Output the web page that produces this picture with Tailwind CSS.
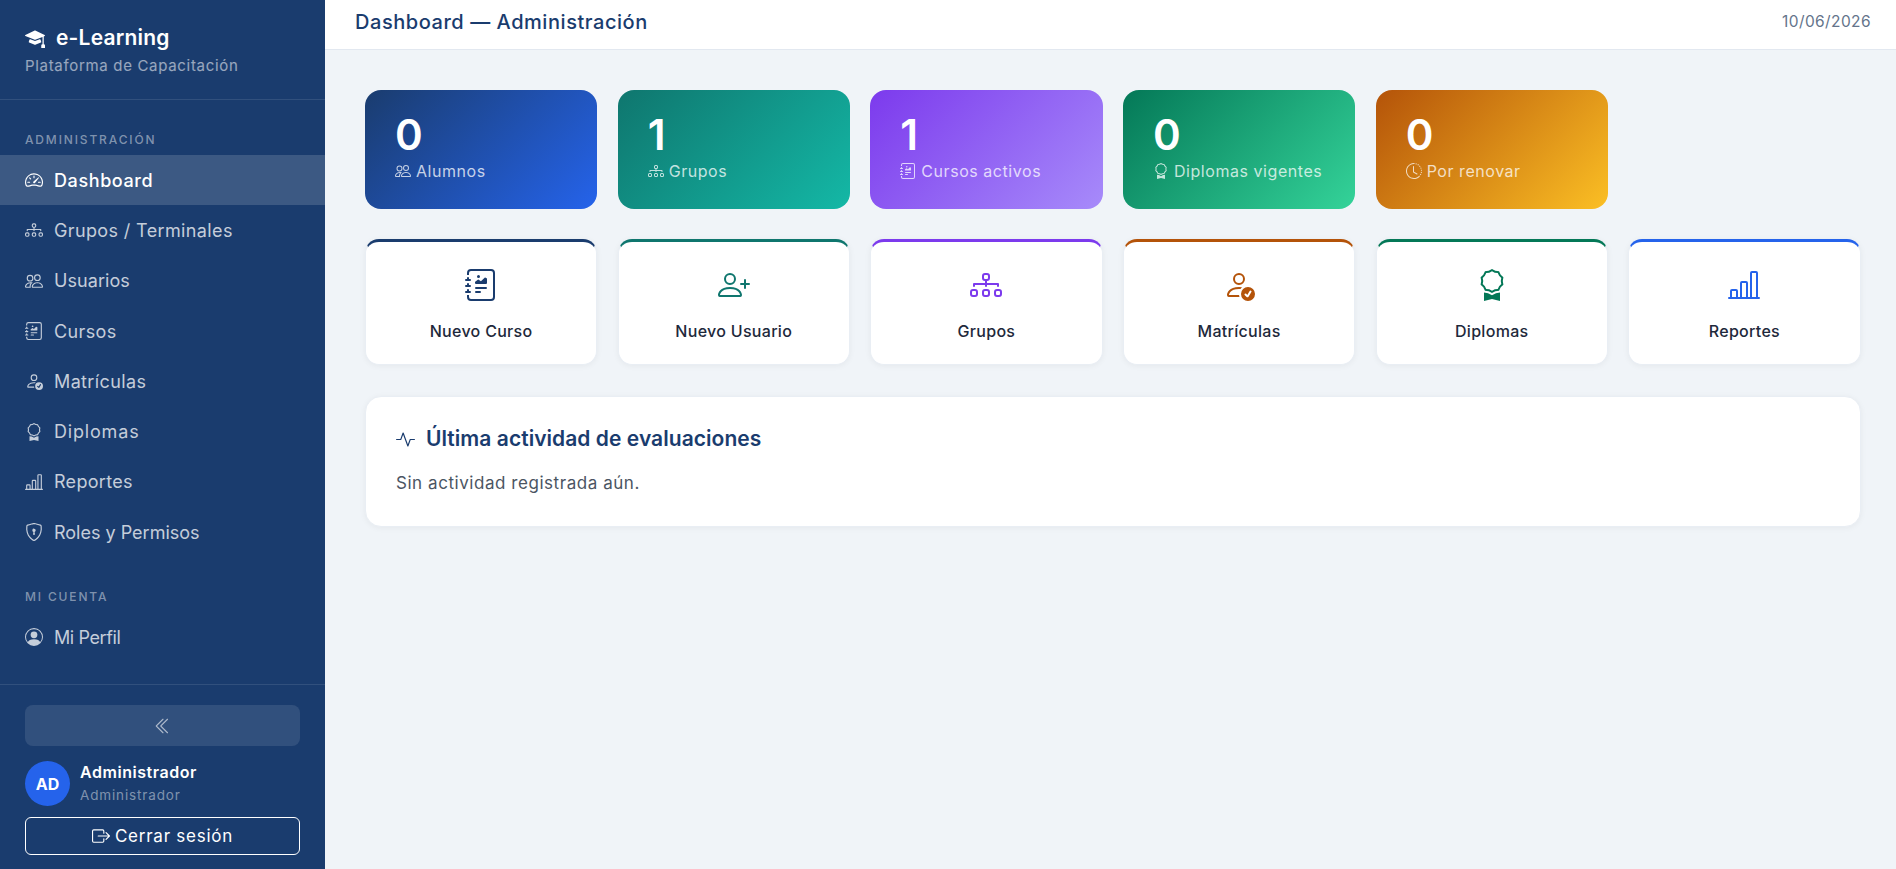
<!DOCTYPE html>
<html lang="es">
<head>
<meta charset="utf-8">
<title>Dashboard</title>
<script src="https://cdn.jsdelivr.net/npm/@tailwindcss/browser@4"></script>
</head>
<body class="h-[869px] overflow-hidden bg-[#f0f4f8] font-['Inter','Open_Sans',sans-serif]">
<svg class="hidden" xmlns="http://www.w3.org/2000/svg">
<symbol id="mortar" viewBox="0 0 16 16"><path d="M8.211 2.047a.5.5 0 0 0-.422 0l-7.5 3.5a.5.5 0 0 0 .025.917l7.5 3a.5.5 0 0 0 .372 0L14 7.14V13a1 1 0 0 0-1 1v2h3v-2a1 1 0 0 0-1-1V6.739l.686-.275a.5.5 0 0 0 .025-.917z"/><path d="M4.176 9.032a.5.5 0 0 0-.656.327l-.5 1.7a.5.5 0 0 0 .294.605l4.5 1.8a.5.5 0 0 0 .372 0l4.5-1.8a.5.5 0 0 0 .294-.605l-.5-1.7a.5.5 0 0 0-.656-.327L8 10.466z"/></symbol>
<symbol id="speed" viewBox="0 0 16 16"><path d="M8 4a.5.5 0 0 1 .5.5V6a.5.5 0 0 1-1 0V4.5A.5.5 0 0 1 8 4M3.732 5.732a.5.5 0 0 1 .707 0l.915.914a.5.5 0 1 1-.708.708l-.914-.915a.5.5 0 0 1 0-.707M2 10a.5.5 0 0 1 .5-.5h1.586a.5.5 0 0 1 0 1H2.5A.5.5 0 0 1 2 10m9.5 0a.5.5 0 0 1 .5-.5h1.5a.5.5 0 0 1 0 1H12a.5.5 0 0 1-.5-.5m.754-4.246a.39.39 0 0 0-.527-.02L7.547 9.31a.91.91 0 1 0 1.302 1.258l3.434-4.297a.39.39 0 0 0-.029-.518z"/><path fill-rule="evenodd" d="M0 10a8 8 0 1 1 15.547 2.661c-.442 1.253-1.845 1.602-2.932 1.25C11.309 13.488 9.475 13 8 13c-1.474 0-3.31.488-4.615.911-1.087.352-2.49.003-2.932-1.25A8 8 0 0 1 0 10m8-7a7 7 0 0 0-6.603 9.329c.203.575.923.876 1.68.63C4.397 12.533 6.358 12 8 12s3.604.532 4.923.96c.757.245 1.477-.056 1.68-.631A7 7 0 0 0 8 3"/></symbol>
<symbol id="diagram" viewBox="0 0 16 16"><path fill-rule="evenodd" d="M6 3.5A1.5 1.5 0 0 1 7.5 2h1A1.5 1.5 0 0 1 10 3.5v1A1.5 1.5 0 0 1 8.5 6v1H14a.5.5 0 0 1 .5.5v1a.5.5 0 0 1-1 0V8h-5v.5a.5.5 0 0 1-1 0V8h-5v.5a.5.5 0 0 1-1 0v-1A.5.5 0 0 1 2 7h5.5V6A1.5 1.5 0 0 1 6 4.5zM8.5 5a.5.5 0 0 0 .5-.5v-1a.5.5 0 0 0-.5-.5h-1a.5.5 0 0 0-.5.5v1a.5.5 0 0 0 .5.5zM0 11.5A1.5 1.5 0 0 1 1.5 10h1A1.5 1.5 0 0 1 4 11.5v1A1.5 1.5 0 0 1 2.5 14h-1A1.5 1.5 0 0 1 0 12.5zm1.5-.5a.5.5 0 0 0-.5.5v1a.5.5 0 0 0 .5.5h1a.5.5 0 0 0 .5-.5v-1a.5.5 0 0 0-.5-.5zm4.5.5A1.5 1.5 0 0 1 7.5 10h1a1.5 1.5 0 0 1 1.5 1.5v1A1.5 1.5 0 0 1 8.5 14h-1A1.5 1.5 0 0 1 6 12.5zm1.5-.5a.5.5 0 0 0-.5.5v1a.5.5 0 0 0 .5.5h1a.5.5 0 0 0 .5-.5v-1a.5.5 0 0 0-.5-.5zm4.5.5a1.5 1.5 0 0 1 1.5-1.5h1a1.5 1.5 0 0 1 1.5 1.5v1a1.5 1.5 0 0 1-1.5 1.5h-1a1.5 1.5 0 0 1-1.5-1.5zm1.5-.5a.5.5 0 0 0-.5.5v1a.5.5 0 0 0 .5.5h1a.5.5 0 0 0 .5-.5v-1a.5.5 0 0 0-.5-.5z"/></symbol>
<symbol id="people" viewBox="0 0 16 16"><path d="M15 14s1 0 1-1-1-4-5-4-5 3-5 4 1 1 1 1zm-7.978-1L7 12.996c.001-.264.167-1.03.76-1.72C8.312 10.629 9.282 10 11 10c1.717 0 2.687.63 3.24 1.276.593.69.758 1.457.76 1.72l-.008.002-.014.002zM11 7a2 2 0 1 0 0-4 2 2 0 0 0 0 4m3-2a3 3 0 1 1-6 0 3 3 0 0 1 6 0M6.936 9.28a6 6 0 0 0-1.23-.247A7 7 0 0 0 5 9c-4 0-5 3-5 4q0 1 1 1h4.216A2.24 2.24 0 0 1 5 13c0-1.01.377-2.042 1.09-2.904.243-.294.526-.569.846-.816M4.92 10A5.5 5.5 0 0 0 4 13H1c0-.26.164-1.03.76-1.724.545-.636 1.492-1.256 3.16-1.275ZM1.5 5.5a3 3 0 1 1 6 0 3 3 0 0 1-6 0m3-2a2 2 0 1 0 0 4 2 2 0 0 0 0-4"/></symbol>
<symbol id="journal" viewBox="0 0 16 16"><path d="M7.5 3.75a.75.75 0 1 1-1.5 0 .75.75 0 0 1 1.5 0m-.861 1.542 1.33.886 1.854-1.855a.25.25 0 0 1 .289-.047L11 4.75V7a.5.5 0 0 1-.5.5h-5A.5.5 0 0 1 5 7v-.5s1.54-1.274 1.639-1.208M5 9.5a.5.5 0 0 1 .5-.5h5a.5.5 0 0 1 0 1h-5a.5.5 0 0 1-.5-.5m0 2a.5.5 0 0 1 .5-.5h2a.5.5 0 0 1 0 1h-2a.5.5 0 0 1-.5-.5"/><path d="M3 0h10a2 2 0 0 1 2 2v12a2 2 0 0 1-2 2H3a2 2 0 0 1-2-2v-1h1v1a1 1 0 0 0 1 1h10a1 1 0 0 0 1-1V2a1 1 0 0 0-1-1H3a1 1 0 0 0-1 1v1H1V2a2 2 0 0 1 2-2"/><path d="M1 5v-.5a.5.5 0 0 1 1 0V5h.5a.5.5 0 0 1 0 1h-2a.5.5 0 0 1 0-1zm0 3v-.5a.5.5 0 0 1 1 0V8h.5a.5.5 0 0 1 0 1h-2a.5.5 0 0 1 0-1zm0 3v-.5a.5.5 0 0 1 1 0v.5h.5a.5.5 0 0 1 0 1h-2a.5.5 0 0 1 0-1z"/></symbol>
<symbol id="pcheck" viewBox="0 0 16 16"><path d="M12.5 16a3.5 3.5 0 1 0 0-7 3.5 3.5 0 0 0 0 7m1.679-4.493-1.335 2.226a.75.75 0 0 1-1.174.144l-.774-.773a.5.5 0 0 1 .708-.708l.547.548 1.17-1.951a.5.5 0 1 1 .858.514M11 5a3 3 0 1 1-6 0 3 3 0 0 1 6 0M8 7a2 2 0 1 0 0-4 2 2 0 0 0 0 4"/><path d="M8.256 14a4.5 4.5 0 0 1-.229-1.004H3c.001-.246.154-.986.832-1.664C4.484 10.68 5.711 10 8 10q.39 0 .74.025c.226-.341.496-.65.804-.918Q8.844 9.002 8 9c-5 0-6 3-6 4s1 1 1 1z"/></symbol>
<symbol id="award" viewBox="0 0 16 16"><path d="M9.669.864 8 0 6.331.864l-1.858.282-.842 1.68-1.337 1.32L2.6 6l-.306 1.854 1.337 1.32.842 1.68 1.858.282L8 12l1.669-.864 1.858-.282.842-1.68 1.337-1.32L13.4 6l.306-1.854-1.337-1.32-.842-1.68zm1.196 1.193.684 1.365 1.086 1.072L12.387 6l.248 1.506-1.086 1.072-.684 1.365-1.51.229L8 10.874l-1.355-.702-1.51-.229-.684-1.365-1.086-1.072L3.614 6l-.25-1.506 1.087-1.072.684-1.365 1.51-.229L8 1.126l1.356.702z"/><path d="M4 11.794V16l4-1 4 1v-4.206l-2.018.306L8 13.126 6.018 12.1z"/></symbol>
<symbol id="chart" viewBox="0 0 16 16"><path d="M11 2a1 1 0 0 1 1-1h2a1 1 0 0 1 1 1v12h.5a.5.5 0 0 1 0 1H.5a.5.5 0 0 1 0-1H1v-3a1 1 0 0 1 1-1h2a1 1 0 0 1 1 1v3h1V7a1 1 0 0 1 1-1h2a1 1 0 0 1 1 1v7h1zm1 12h2V2h-2zm-3 0V7H7v7zm-5 0v-3H2v3z"/></symbol>
<symbol id="shield" viewBox="0 0 16 16"><path d="M5.338 1.59a61 61 0 0 0-2.837.856.48.48 0 0 0-.328.39c-.554 4.157.726 7.19 2.253 9.188a10.7 10.7 0 0 0 2.287 2.233c.346.244.652.42.893.533q.18.085.293.118a1 1 0 0 0 .101.025 1 1 0 0 0 .1-.025q.114-.034.294-.118c.24-.113.547-.29.893-.533a10.7 10.7 0 0 0 2.287-2.233c1.527-1.997 2.807-5.031 2.253-9.188a.48.48 0 0 0-.328-.39c-.651-.213-1.75-.56-2.837-.855C9.552 1.29 8.531 1.067 8 1.067c-.53 0-1.552.223-2.662.524zM5.072.56C6.157.265 7.31 0 8 0s1.843.265 2.928.56c1.11.3 2.229.655 2.887.87a1.54 1.54 0 0 1 1.044 1.262c.596 4.477-.787 7.795-2.465 9.99a11.8 11.8 0 0 1-2.517 2.453 7 7 0 0 1-1.048.625c-.28.132-.581.24-.829.24s-.548-.108-.829-.24a7 7 0 0 1-1.048-.625 11.8 11.8 0 0 1-2.517-2.453C1.928 10.487.545 7.169 1.141 2.692A1.54 1.54 0 0 1 2.185 1.43 63 63 0 0 1 5.072.56"/><path d="M9.5 6.5a1.5 1.5 0 0 1-1 1.415l.385 1.99a.5.5 0 0 1-.491.595h-.788a.5.5 0 0 1-.49-.595l.384-1.99a1.5 1.5 0 1 1 2-1.415"/></symbol>
<symbol id="pcircle" viewBox="0 0 16 16"><path d="M11 6a3 3 0 1 1-6 0 3 3 0 0 1 6 0"/><path fill-rule="evenodd" d="M0 8a8 8 0 1 1 16 0A8 8 0 0 1 0 8m8-7a7 7 0 0 0-5.468 11.37C3.242 11.226 4.805 10 8 10s4.757 1.225 5.468 2.37A7 7 0 0 0 8 1"/></symbol>
<symbol id="chev" viewBox="0 0 16 16"><path fill-rule="evenodd" d="M8.354 1.646a.5.5 0 0 1 0 .708L2.707 8l5.647 5.646a.5.5 0 0 1-.708.708l-6-6a.5.5 0 0 1 0-.708l6-6a.5.5 0 0 1 .708 0"/><path fill-rule="evenodd" d="M12.354 1.646a.5.5 0 0 1 0 .708L6.707 8l5.647 5.646a.5.5 0 0 1-.708.708l-6-6a.5.5 0 0 1 0-.708l6-6a.5.5 0 0 1 .708 0"/></symbol>
<symbol id="logout" viewBox="0 0 16 16"><path fill-rule="evenodd" d="M10 12.5a.5.5 0 0 1-.5.5h-8a.5.5 0 0 1-.5-.5v-9a.5.5 0 0 1 .5-.5h8a.5.5 0 0 1 .5.5v2a.5.5 0 0 0 1 0v-2A1.5 1.5 0 0 0 9.5 2h-8A1.5 1.5 0 0 0 0 3.5v9A1.5 1.5 0 0 0 1.5 14h8a1.5 1.5 0 0 0 1.5-1.5v-2a.5.5 0 0 0-1 0z"/><path fill-rule="evenodd" d="M15.854 8.354a.5.5 0 0 0 0-.708l-3-3a.5.5 0 0 0-.708.708L14.293 7.5H5.5a.5.5 0 0 0 0 1h8.793l-2.147 2.146a.5.5 0 0 0 .708.708z"/></symbol>
<symbol id="pplus" viewBox="0 0 16 16"><path d="M6 8a3 3 0 1 0 0-6 3 3 0 0 0 0 6m2-3a2 2 0 1 1-4 0 2 2 0 0 1 4 0m4 8c0 1-1 1-1 1H1s-1 0-1-1 1-4 6-4 6 3 6 4m-1-.004c-.001-.246-.154-.986-.832-1.664C9.516 10.68 8.289 10 6 10s-3.516.68-4.168 1.332c-.678.678-.83 1.418-.832 1.664z"/><path fill-rule="evenodd" d="M13.5 5a.5.5 0 0 1 .5.5V7h1.5a.5.5 0 0 1 0 1H14v1.5a.5.5 0 0 1-1 0V8h-1.5a.5.5 0 0 1 0-1H13V5.5a.5.5 0 0 1 .5-.5"/></symbol>
<symbol id="clockh" viewBox="0 0 16 16"><path d="M8.515 1.019A7 7 0 0 0 8 1V0a8 8 0 0 1 .589.022zm2.004.45a7 7 0 0 0-.985-.299l.219-.976q.576.129 1.126.342zm1.37.71a7 7 0 0 0-.439-.27l.493-.87a8 8 0 0 1 .979.654l-.615.789a7 7 0 0 0-.418-.302zm1.834 1.79a7 7 0 0 0-.653-.796l.724-.69q.406.429.747.91zm.744 1.352a7 7 0 0 0-.214-.468l.893-.45a8 8 0 0 1 .45 1.088l-.95.313a7 7 0 0 0-.179-.483m.53 2.507a7 7 0 0 0-.1-1.025l.985-.17q.1.58.116 1.17zm-.131 1.538q.05-.254.081-.51l.993.123a8 8 0 0 1-.23 1.155l-.964-.267q.069-.247.12-.501m-.952 2.379q.276-.436.486-.908l.914.405q-.24.54-.555 1.038zm-.964 1.205q.183-.183.35-.378l.758.653a8 8 0 0 1-.401.432z"/><path d="M8 1a7 7 0 1 0 4.95 11.95l.707.707A8.001 8.001 0 1 1 8 0z"/><path d="M7.5 3a.5.5 0 0 1 .5.5v5.21l3.248 1.856a.5.5 0 0 1-.496.868l-3.5-2A.5.5 0 0 1 7 9V3.5a.5.5 0 0 1 .5-.5"/></symbol>
<symbol id="activity" viewBox="0 0 16 16"><path fill-rule="evenodd" d="M6 2a.5.5 0 0 1 .47.33L10 12.036l1.53-4.208A.5.5 0 0 1 12 7.5h3.5a.5.5 0 0 1 0 1h-3.15l-1.88 5.17a.5.5 0 0 1-.94 0L6 3.964 4.47 8.171A.5.5 0 0 1 4 8.5H.5a.5.5 0 0 1 0-1h3.15l1.88-5.17A.5.5 0 0 1 6 2"/></symbol>
</svg>

<div class="flex h-[869px]">
  <aside class="flex w-[325px] shrink-0 flex-col bg-[#1a3c6e]">
    <div class="h-[100px] border-b border-white/10 px-[25px] pt-[25px]">
      <div class="flex h-[26px] items-center gap-[11px] text-[21px] leading-[26px] font-semibold tracking-[0.2px] text-white">
        <svg class="size-[20px] fill-current"><use href="#mortar"/></svg><span>e-Learning</span>
      </div>
      <div class="mt-[4px] text-[15px] leading-[22px] tracking-[0.68px] text-white/55">Plataforma de Capacitación</div>
    </div>
    <nav class="flex-1">
      <div class="flex h-[55px] items-end px-[25px] pb-[7px] text-[12px] leading-[16px] font-medium tracking-[1.85px] text-white/45">ADMINISTRACIÓN</div>
      <a class="flex h-[50.3px] items-center gap-[11px] bg-white/15 px-[25px] text-[18px] font-medium tracking-[0.6px] text-white"><svg class="size-[18px] fill-current"><use href="#speed"/></svg><span>Dashboard</span></a>
      <a class="flex h-[50.3px] items-center gap-[11px] px-[25px] text-[18px] tracking-[0.37px] text-white/75"><svg class="size-[18px] fill-current"><use href="#diagram"/></svg><span>Grupos / Terminales</span></a>
      <a class="flex h-[50.3px] items-center gap-[11px] px-[25px] text-[18px] tracking-[0.07px] text-white/75"><svg class="size-[18px] fill-current"><use href="#people"/></svg><span>Usuarios</span></a>
      <a class="flex h-[50.3px] items-center gap-[11px] px-[25px] text-[18px] tracking-[0.37px] text-white/75"><svg class="size-[18px] fill-current"><use href="#journal"/></svg><span>Cursos</span></a>
      <a class="flex h-[50.3px] items-center gap-[11px] px-[25px] text-[18px] tracking-[0.37px] text-white/75"><svg class="size-[18px] fill-current"><use href="#pcheck"/></svg><span>Matrículas</span></a>
      <a class="flex h-[50.3px] items-center gap-[11px] px-[25px] text-[18px] tracking-[0.82px] text-white/75"><svg class="size-[18px] fill-current"><use href="#award"/></svg><span>Diplomas</span></a>
      <a class="flex h-[50.3px] items-center gap-[11px] px-[25px] text-[18px] tracking-[0.3px] text-white/75"><svg class="size-[18px] fill-current"><use href="#chart"/></svg><span>Reportes</span></a>
      <a class="flex h-[50.3px] items-center gap-[11px] px-[25px] text-[18px] tracking-[0px] text-white/75"><svg class="size-[18px] fill-current"><use href="#shield"/></svg><span>Roles y Permisos</span></a>
      <div class="flex h-[54.6px] items-end px-[25px] pb-[7px] text-[12px] leading-[16px] font-medium tracking-[1.85px] text-white/45">MI CUENTA</div>
      <a class="flex h-[50.3px] items-center gap-[11px] px-[25px] text-[18px] tracking-[-0.4px] text-white/75"><svg class="size-[18px] fill-current"><use href="#pcircle"/></svg><span>Mi Perfil</span></a>
    </nav>
    <div class="border-t border-white/10 px-[25px] pt-[20px] pb-[14px]">
      <button class="flex h-[41px] w-full items-center justify-center rounded-[8px] bg-white/10 text-white/60"><svg class="size-[18px] fill-current"><use href="#chev"/></svg></button>
      <div class="mt-[15px] flex h-[45px] items-center gap-[10px]">
        <div class="flex size-[45px] items-center justify-center rounded-full bg-[#2563eb] text-[16px] font-bold text-white">AD</div>
        <div>
          <div class="pt-[1px] text-[16px] leading-[22px] font-semibold tracking-[0.55px] text-white">Administrador</div>
          <div class="mt-[1px] text-[13.5px] leading-[23px] tracking-[0.85px] text-white/45">Administrador</div>
        </div>
      </div>
      <button class="mt-[11px] flex h-[38px] w-full items-center justify-center gap-[5px] rounded-[6px] border border-white text-[17px] tracking-[0.75px] text-white"><svg class="size-[18px] fill-current"><use href="#logout"/></svg><span class="pt-[1px]">Cerrar sesión</span></button>
    </div>
  </aside>

  <main class="min-w-0 flex-1">
    <header class="flex h-[50px] items-center justify-between border-b border-[#e2e8f0] bg-white pr-[25px] pb-[5px] pl-[30px]">
      <h1 class="text-[20px] font-medium tracking-[0.55px] text-[#1a3c6e]">Dashboard — Administración</h1>
      <span class="text-[15.5px] tracking-[0.4px] text-[#64748b]">10/06/2026</span>
    </header>
    <div class="pt-[40px] pr-[35.5px] pl-[40px]">
      <section class="grid grid-cols-6 gap-[20.5px]">
        <div class="flex h-[119px] flex-col rounded-[16px] bg-linear-[135deg,#1a3c6e,#2563eb] pt-[21px] pl-[30px] text-white">
          <div class="text-[42px] leading-[48px] font-semibold">0</div>
          <div class="flex items-center gap-[5px] text-[16px] leading-[24px] tracking-[0.55px] text-white/75"><svg class="size-[16px] fill-current"><use href="#people"/></svg>Alumnos</div>
        </div>
        <div class="flex h-[119px] flex-col rounded-[16px] bg-linear-[135deg,#0f766e,#14b8a6] pt-[21px] pl-[30px] text-white">
          <div class="text-[42px] leading-[48px] font-semibold">1</div>
          <div class="flex items-center gap-[5px] text-[16px] leading-[24px] tracking-[0.55px] text-white/75"><svg class="size-[16px] fill-current"><use href="#diagram"/></svg>Grupos</div>
        </div>
        <div class="flex h-[119px] flex-col rounded-[16px] bg-linear-[135deg,#7c3aed,#a78bfa] pt-[21px] pl-[30px] text-white">
          <div class="text-[42px] leading-[48px] font-semibold">1</div>
          <div class="flex items-center gap-[5px] text-[16px] leading-[24px] tracking-[0.55px] text-white/75"><svg class="size-[16px] fill-current"><use href="#journal"/></svg>Cursos activos</div>
        </div>
        <div class="flex h-[119px] flex-col rounded-[16px] bg-linear-[135deg,#047857,#34d399] pt-[21px] pl-[30px] text-white">
          <div class="text-[42px] leading-[48px] font-semibold">0</div>
          <div class="flex items-center gap-[5px] text-[16px] leading-[24px] tracking-[0.55px] text-white/75"><svg class="size-[16px] fill-current"><use href="#award"/></svg>Diplomas vigentes</div>
        </div>
        <div class="flex h-[119px] flex-col rounded-[16px] bg-linear-[135deg,#b45309,#fbbf24] pt-[21px] pl-[30px] text-white">
          <div class="text-[42px] leading-[48px] font-semibold">0</div>
          <div class="flex items-center gap-[5px] text-[16px] leading-[24px] tracking-[0.55px] text-white/75"><svg class="size-[16px] fill-current"><use href="#clockh"/></svg>Por renovar</div>
        </div>
      </section>

      <section class="mt-[30px] grid grid-cols-6 gap-[20.5px]">
        <a class="flex h-[126px] flex-col items-center rounded-[14px] border border-t-[3px] border-[#e9eef4] border-t-[#1a3c6e] bg-white pt-[27px] text-[#1a3c6e] shadow-[0_1px_6px_rgba(0,0,0,0.05)]"><svg class="size-[32px] fill-current"><use href="#journal"/></svg><span class="mt-[18px] text-[16px] leading-[24px] font-medium tracking-[0.3px] text-[#1e293b]">Nuevo Curso</span></a>
        <a class="flex h-[126px] flex-col items-center rounded-[14px] border border-t-[3px] border-[#e9eef4] border-t-[#0f766e] bg-white pt-[27px] text-[#0f766e] shadow-[0_1px_6px_rgba(0,0,0,0.05)]"><svg class="size-[32px] fill-current"><use href="#pplus"/></svg><span class="mt-[18px] text-[16px] leading-[24px] font-medium tracking-[0.3px] text-[#1e293b]">Nuevo Usuario</span></a>
        <a class="flex h-[126px] flex-col items-center rounded-[14px] border border-t-[3px] border-[#e9eef4] border-t-[#7c3aed] bg-white pt-[27px] text-[#7c3aed] shadow-[0_1px_6px_rgba(0,0,0,0.05)]"><svg class="size-[32px] fill-current"><use href="#diagram"/></svg><span class="mt-[18px] text-[16px] leading-[24px] font-medium tracking-[0.3px] text-[#1e293b]">Grupos</span></a>
        <a class="flex h-[126px] flex-col items-center rounded-[14px] border border-t-[3px] border-[#e9eef4] border-t-[#b45309] bg-white pt-[27px] text-[#b45309] shadow-[0_1px_6px_rgba(0,0,0,0.05)]"><svg class="size-[32px] fill-current"><use href="#pcheck"/></svg><span class="mt-[18px] text-[16px] leading-[24px] font-medium tracking-[0.3px] text-[#1e293b]">Matrículas</span></a>
        <a class="flex h-[126px] flex-col items-center rounded-[14px] border border-t-[3px] border-[#e9eef4] border-t-[#047857] bg-white pt-[27px] text-[#047857] shadow-[0_1px_6px_rgba(0,0,0,0.05)]"><svg class="size-[32px] fill-current"><use href="#award"/></svg><span class="mt-[18px] text-[16px] leading-[24px] font-medium tracking-[0.3px] text-[#1e293b]">Diplomas</span></a>
        <a class="flex h-[126px] flex-col items-center rounded-[14px] border border-t-[3px] border-[#e9eef4] border-t-[#2563eb] bg-white pt-[27px] text-[#2563eb] shadow-[0_1px_6px_rgba(0,0,0,0.05)]"><svg class="size-[32px] fill-current"><use href="#chart"/></svg><span class="mt-[18px] text-[16px] leading-[24px] font-medium tracking-[0.3px] text-[#1e293b]">Reportes</span></a>
      </section>

      <section class="mt-[31px] h-[131px] rounded-[16px] border border-[#e9eef4] bg-white pt-[28px] pl-[30px] shadow-[0_1px_6px_rgba(0,0,0,0.05)]">
        <h2 class="flex h-[28px] items-center gap-[11px] text-[21px] font-semibold tracking-[0.05px] text-[#1a3c6e]"><svg class="size-[19px] fill-current"><use href="#activity"/></svg><span>Última actividad de evaluaciones</span></h2>
        <p class="mt-[16px] text-[17px] leading-[28px] tracking-[0.55px] text-[#4b5563]">Sin actividad registrada aún.</p>
      </section>
    </div>
  </main>
</div>
</body>
</html>
